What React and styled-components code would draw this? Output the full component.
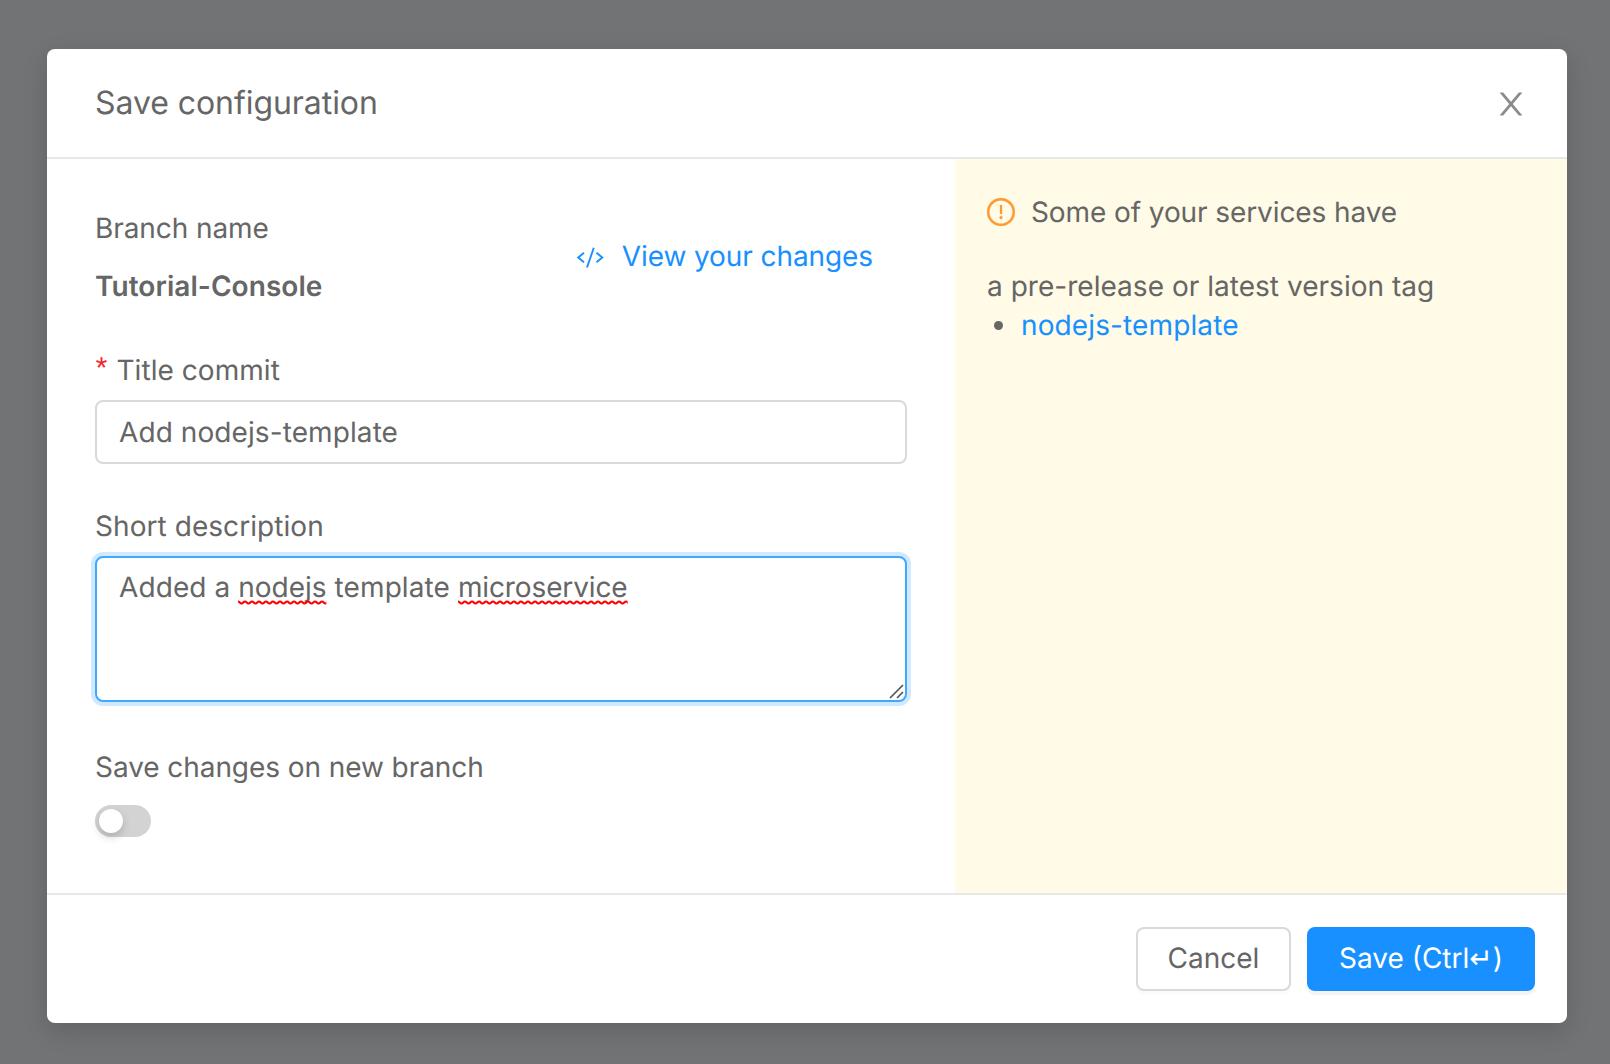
import React from "react";
import styled, { createGlobalStyle, css } from "styled-components";

const GlobalStyle = createGlobalStyle`
  *, *::before, *::after { box-sizing: border-box; }
  body {
    margin: 0;
    background: #727375;
    color: #666;
    font: 400 28px/44px Inter, "Liberation Sans", sans-serif;
    text-rendering: geometricPrecision;
  }
  button, input { font: inherit; text-rendering: inherit; }
  button { cursor: pointer; }
`;

const Backdrop = styled.main`
  display: flex;
  height: 1064px;
  padding: 49px 43px 41px 47px;
  overflow: hidden;
`;

const Dialog = styled.section`
  display: flex;
  flex: 1;
  flex-direction: column;
  background: #fff;
  border-radius: 8px;
  box-shadow: 0 8px 24px rgba(0, 0, 0, 0.15);
`;

const Header = styled.header`
  display: flex;
  align-items: center;
  justify-content: space-between;
  height: 110px;
  padding: 2px 38px 0 48px;
  border-bottom: 2px solid #e8e8e8;
`;

const Title = styled.h1`
  margin: 0 0 2px;
  font-size: 32px;
  font-weight: 400;
  line-height: 44px;
  letter-spacing: -0.06px;
`;

const CloseButton = styled.button`
  display: flex;
  padding: 0;
  border: 0;
  background: none;
  color: #8c8c8c;
`;

const Body = styled.div`
  display: grid;
  grid-template-columns: 908px 1fr;
  flex: 1;
`;

const Form = styled.form`
  display: flex;
  flex-direction: column;
  padding: 40px 48px 0;
`;

const BranchRow = styled.div`
  display: flex;
  align-items: center;
  justify-content: space-between;
  height: 116px;
  padding-right: 34px;
`;

const BranchInfo = styled.div`
  display: flex;
  flex-direction: column;
  gap: 14px;
  letter-spacing: -0.08px;
`;

const BranchName = styled.strong`
  font-weight: 600;
  letter-spacing: 0.06px;
`;

const ChangesLink = styled.a`
  display: flex;
  align-items: center;
  gap: 18px;
  margin-bottom: 2px;
  color: #1890ff;
  letter-spacing: -0.09px;
`;

const Field = styled.div`
  display: flex;
  flex-direction: column;
  margin-top: ${(p) => p.$top}px;
`;

const Label = styled.label`
  display: flex;
  gap: 8px;
  height: ${(p) => p.$height || 52}px;
  letter-spacing: ${(p) => p.$tracking || 0}px;
`;

const Required = styled.span`
  width: 16px;
  margin-left: -2.5px;
  padding-top: 2px;
  font-family: "Liberation Mono", monospace;
  font-size: 30px;
  color: #f5222d;
`;

const control = css`
  width: 812px;
  border: 2px solid #d9d9d9;
  border-radius: 8px;
  padding: 0 22px;
  color: inherit;
  background: #fff;
`;

const TextInput = styled.input`
  ${control}
  height: 64px;
  outline: none;
  letter-spacing: 0.09px;
`;

const TextArea = styled.div`
  ${control}
  display: flex;
  justify-content: space-between;
  height: 146px;
  padding: 7px 0 1px 22px;
  border-color: #40a9ff;
  box-shadow: 0 0 0 4px rgba(24, 144, 255, 0.2);
  outline: none;
  white-space: pre;
  letter-spacing: 0.09px;
`;

const Misspelled = styled.span`
  position: relative;
  letter-spacing: ${(p) => p.$tracking || 0}px;
`;

const Squiggle = styled.svg`
  position: absolute;
  left: 0;
  bottom: -1px;
  width: 100%;
  height: 5px;
`;

const ResizeGrip = styled.svg`
  align-self: flex-end;
`;

const Switch = styled.button`
  display: flex;
  width: 56px;
  height: 32px;
  padding: 4px;
  border: 0;
  border-radius: 16px;
  background: #d3d3d3;
`;

const Knob = styled.span`
  width: 24px;
  height: 24px;
  border-radius: 50%;
  background: #fff;
  box-shadow: 0 4px 8px rgba(0, 35, 11, 0.2);
`;

const Notice = styled.aside`
  padding: 31px 32px;
  background: #fffbe6;
`;

const NoticeHeading = styled.div`
  display: flex;
  align-items: center;
  gap: 16px;
  height: 44px;
  letter-spacing: -0.09px;
`;

const NoticeText = styled.p`
  margin: 33px 0 0;
  line-height: 39px;
  letter-spacing: 0.03px;
`;

const ServiceList = styled.ul`
  margin: 0;
  padding: 0;
  list-style: none;
`;

const ServiceItem = styled.li`
  display: flex;
  align-items: center;
  gap: 18px;
  padding-left: 7px;
  line-height: 39px;
  letter-spacing: 0.12px;
  color: #1890ff;

  &::before {
    content: "";
    width: 9px;
    height: 9px;
    border-radius: 50%;
    background: #666;
  }
`;

const Footer = styled.footer`
  display: flex;
  justify-content: flex-end;
  gap: 16px;
  height: 130px;
  padding: 32px;
  border-top: 2px solid #e8e8e8;
`;

const Button = styled.button`
  width: ${(p) => (p.$primary ? 228 : 155)}px;
  height: 64px;
  padding: 0 0 2px;
  border: 2px solid ${(p) => (p.$primary ? "#1890ff" : "#d9d9d9")};
  border-radius: 8px;
  background: ${(p) => (p.$primary ? "#1890ff" : "#fff")};
  color: ${(p) => (p.$primary ? "#fff" : "#666")};
  box-shadow: 0 4px 0 rgba(0, 0, 0, ${(p) => (p.$primary ? 0.045 : 0.015)});
  white-space: nowrap;
`;

const KeyGlyph = styled.span`
  font-family: "DejaVu Sans", sans-serif;
  font-size: 28px;
  line-height: 0;
`;

function CloseIcon() {
  return (
    <svg width="36" height="36" viewBox="0 0 1024 1024" fill="currentColor">
      <path d="M563.8 512l262.5-312.9c4.4-5.2.7-13.1-6.1-13.1h-79.8c-4.7 0-9.2 2.1-12.3 5.7L511.6 449.8 295.1 191.7c-3-3.6-7.5-5.7-12.3-5.7H203c-6.8 0-10.5 7.9-6.1 13.1L459.4 512 196.9 824.9A7.95 7.95 0 0 0 203 838h79.8c4.7 0 9.2-2.1 12.3-5.7l216.5-258.1 216.5 258.1c3 3.6 7.5 5.7 12.3 5.7h79.8c6.8 0 10.5-7.9 6.1-13.1L563.8 512z" />
    </svg>
  );
}

function CodeIcon() {
  return (
    <svg width="28" height="28" viewBox="0 0 28 28" fill="none" stroke="currentColor" strokeWidth="1.900">
      <path d="M8 10.800L2.200 15.500L8 20.200M20.500 10.800L26.300 15.500L20.500 20.200M17.800 5.800L11 25.500" />
    </svg>
  );
}

function WarningIcon() {
  return (
    <svg width="28" height="28" viewBox="64 64 896 896" fill="#ff9933" stroke="#ff9933" strokeWidth="8">
      <path d="M512 64C264.600 64 64 264.600 64 512s200.600 448 448 448 448-200.600 448-448S759.400 64 512 64zm0 820c-205.400 0-372-166.600-372-372s166.600-372 372-372 372 166.600 372 372-166.600 372-372 372z" />
      <path d="M464 688a48 48 0 1 0 96 0 48 48 0 1 0-96 0zm24-112h48c4.400 0 8-3.600 8-8V296c0-4.400-3.600-8-8-8h-48c-4.400 0-8 3.600-8 8v272c0 4.400 3.600 8 8 8z" />
    </svg>
  );
}

function Typo({ id, tracking, children }) {
  return (
    <Misspelled $tracking={tracking}>
      {children}
      <Squiggle>
        <defs>
          <pattern id={id} width="7" height="5" patternUnits="userSpaceOnUse">
            <path d="M-3.500 3.500C-1.750 3.500 -1.750 1.500 0 1.500C1.750 1.500 1.750 3.500 3.500 3.500S5.250 1.500 7 1.500S8.750 3.500 10.500 3.500" fill="none" stroke="#f00" strokeWidth="2" />
          </pattern>
        </defs>
        <rect width="100%" height="5" fill={`url(#${id})`} />
      </Squiggle>
    </Misspelled>
  );
}

export default function App() {
  return (
    <>
      <GlobalStyle />
      <Backdrop>
        <Dialog role="dialog">
          <Header>
            <Title>Save configuration</Title>
            <CloseButton aria-label="Close"><CloseIcon /></CloseButton>
          </Header>
          <Body>
            <Form>
              <BranchRow>
                <BranchInfo>
                  <span>Branch name</span>
                  <BranchName>Tutorial-Console</BranchName>
                </BranchInfo>
                <ChangesLink><CodeIcon />View your changes</ChangesLink>
              </BranchRow>
              <Field $top={33}>
                <Label $tracking={0.05}><Required>*</Required>Title commit</Label>
                <TextInput defaultValue="Add nodejs-template" />
              </Field>
              <Field $top={40}>
                <Label $tracking={0.06}>Short description</Label>
                <TextArea role="textbox">
                  <span>Added a <Typo id="wave-a">nodejs</Typo> template <Typo id="wave-b" tracking={-0.12}>microservice</Typo></span>
                  <ResizeGrip width="16" height="16" viewBox="0 0 16 16" stroke="#555" strokeWidth="1.700">
                    <path d="M1 15L14 2M8 15L14 9" />
                  </ResizeGrip>
                </TextArea>
              </Field>
              <Field $top={43}>
                <Label $height={60} $tracking={-0.07}>Save changes on new branch</Label>
                <Switch type="button" role="switch" aria-label="Save changes on new branch"><Knob /></Switch>
              </Field>
            </Form>
            <Notice>
              <NoticeHeading><WarningIcon />Some of your services have</NoticeHeading>
              <NoticeText>a pre-release or latest version tag</NoticeText>
              <ServiceList><ServiceItem>nodejs-template</ServiceItem></ServiceList>
            </Notice>
          </Body>
          <Footer>
            <Button>Cancel</Button>
            <Button $primary>Save (Ctrl<KeyGlyph>↵</KeyGlyph>)</Button>
          </Footer>
        </Dialog>
      </Backdrop>
    </>
  );
}
